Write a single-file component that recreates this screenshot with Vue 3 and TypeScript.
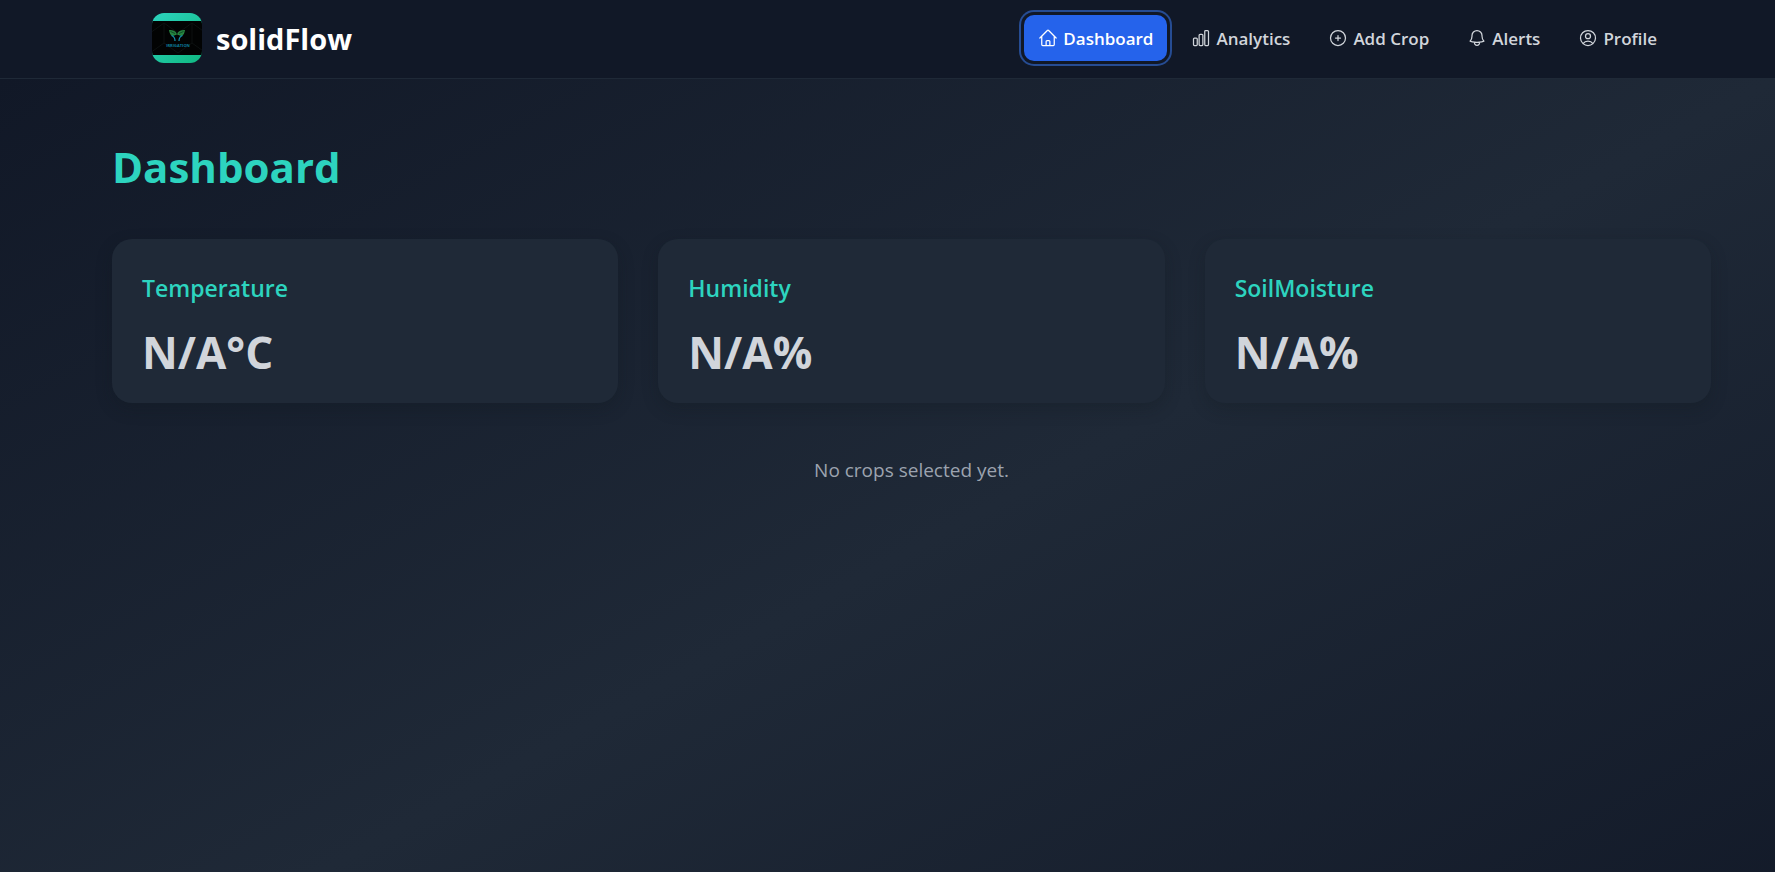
<script setup lang="ts">
import { ref } from 'vue'

interface NavItem {
  label: string
  paths: string[]
}

interface Reading {
  name: string
  value: string
  unit: string
}

const navItems: NavItem[] = [
  {
    label: 'Dashboard',
    paths: [
      'm2.25 12 8.954-8.955c.44-.439 1.152-.439 1.591 0L21.75 12M4.5 9.75v10.125c0 .621.504 1.125 1.125 1.125H9.75v-4.875c0-.621.504-1.125 1.125-1.125h2.25c.621 0 1.125.504 1.125 1.125V21h4.125c.621 0 1.125-.504 1.125-1.125V9.75M8.25 21h8.25',
    ],
  },
  {
    label: 'Analytics',
    paths: [
      'M3 13.125C3 12.504 3.504 12 4.125 12h2.25c.621 0 1.125.504 1.125 1.125v6.75C7.5 20.496 6.996 21 6.375 21h-2.25A1.125 1.125 0 0 1 3 19.875v-6.75Z',
      'M9.75 8.625c0-.621.504-1.125 1.125-1.125h2.25c.621 0 1.125.504 1.125 1.125v11.25c0 .621-.504 1.125-1.125 1.125h-2.25a1.125 1.125 0 0 1-1.125-1.125V8.625Z',
      'M16.5 4.125c0-.621.504-1.125 1.125-1.125h2.25C20.496 3 21 3.504 21 4.125v15.75c0 .621-.504 1.125-1.125 1.125h-2.25a1.125 1.125 0 0 1-1.125-1.125V4.125Z',
    ],
  },
  {
    label: 'Add Crop',
    paths: ['M12 9v6m3-3H9m12 0a9 9 0 1 1-18 0 9 9 0 0 1 18 0Z'],
  },
  {
    label: 'Alerts',
    paths: [
      'M14.857 17.082a23.848 23.848 0 0 0 5.454-1.31A8.967 8.967 0 0 1 18 9.75V9A6 6 0 0 0 6 9v.75a8.967 8.967 0 0 1-2.312 6.022c1.733.64 3.56 1.085 5.455 1.31m5.714 0a24.255 24.255 0 0 1-5.714 0m5.714 0a3 3 0 1 1-5.714 0',
    ],
  },
  {
    label: 'Profile',
    paths: [
      'M17.982 18.725A7.488 7.488 0 0 0 12 15.75a7.488 7.488 0 0 0-5.982 2.975m11.963 0a9 9 0 1 0-11.963 0m11.963 0A8.966 8.966 0 0 1 12 21a8.966 8.966 0 0 1-5.982-2.275M15 9.75a3 3 0 1 1-6 0 3 3 0 0 1 6 0Z',
    ],
  },
]

const readings: Reading[] = [
  { name: 'Temperature', value: 'N/A', unit: '°C' },
  { name: 'Humidity', value: 'N/A', unit: '%' },
  { name: 'SoilMoisture', value: 'N/A', unit: '%' },
]

const active = ref('Dashboard')
</script>

<template>
  <div class="app">
    <header class="topbar">
      <div class="brand">
        <span class="logo">
          <svg viewBox="0 0 50 34" aria-hidden="true">
            <rect width="50" height="34" fill="#020303" />
            <path
              d="M-2 12 12 2 26 12 40 2 54 12M-2 32 12 22 26 32 40 22 54 32M12 2v20M40 2v20"
              fill="none"
              stroke="#0d1111"
            />
            <path
              d="M17 9c3.200-.2 6.200.5 7.600 3.200l.2 1.600c-1.800.2-3.200 1-4.300 1.400C18.600 14.400 17.300 12 17 9ZM33 9c-3.200-.2-6.200.5-7.600 3.200l-.2 1.600c1.800.2 3.200 1 4.300 1.400 1.900-.8 3.200-3.200 3.500-6.200Z"
              fill="#26843f"
            />
            <path d="m18.500 10.500 4.500 2m8.500-2-4.500 2" stroke="#0a3d22" stroke-width=".8" />
            <path
              d="M19.500 14.500c2 .6 3.500 2.200 3.500 5.500M30.500 14.500c-2 .6-3.500 2.200-3.500 5.500"
              fill="none"
              stroke="#128ba8"
              stroke-width="1.300"
            />
            <text x="26" y="26" text-anchor="middle">IRRIGATION</text>
          </svg>
        </span>
        <span class="brand-name">solidFlow</span>
      </div>
      <nav class="nav" aria-label="Main">
        <button
          v-for="item in navItems"
          :key="item.label"
          type="button"
          class="nav-link"
          :class="{ active: active === item.label }"
          @click="active = item.label"
        >
          <svg class="icon" viewBox="0 0 24 24" aria-hidden="true">
            <path v-for="d in item.paths" :key="d" :d="d" />
          </svg>
          <span class="nav-label">{{ item.label }}</span>
        </button>
      </nav>
    </header>

    <main class="page">
      <h1>Dashboard</h1>
      <section class="cards" aria-label="Sensor readings">
        <article v-for="r in readings" :key="r.name" class="card">
          <h2>{{ r.name }}</h2>
          <p class="value">{{ r.value }}{{ r.unit }}</p>
        </article>
      </section>
      <p class="empty">No crops selected yet.</p>
    </main>
  </div>
</template>

<style>
body {
  margin: 0;
  background: #111827;
}

html,
body,
#app {
  height: 100%;
}
</style>

<style scoped>
.app {
  display: flex;
  flex-direction: column;
  height: 100%;
  overflow: hidden;
  font-family: 'Segoe UI', 'Open Sans', 'Noto Sans', sans-serif;
  color: #d1d5db;
}

.topbar {
  flex: none;
  display: flex;
  align-items: center;
  justify-content: space-between;
  padding: 13px 104px 15px 152px;
  background: #111827;
  border-bottom: 1px solid #1f2937;
}

.brand {
  display: flex;
  align-items: center;
  gap: 14px;
}

.logo {
  display: flex;
  align-items: center;
  width: 50px;
  height: 50px;
  overflow: hidden;
  border-radius: 12px;
  background: linear-gradient(135deg, #2dd4bf, #10b981);
}

.logo svg {
  width: 100%;
}

.logo text {
  font-size: 4px;
  font-weight: 700;
  fill: #0c7f9c;
}

.brand-name {
  padding-top: 2px;
  font-size: 29px;
  font-weight: 700;
  line-height: 40px;
  color: #fff;
}

.nav {
  display: flex;
  gap: 10px;
}

.nav-link {
  display: flex;
  align-items: center;
  gap: 5px;
  padding: 9px 14px;
  border: 0;
  border-radius: 10px;
  background: transparent;
  color: #d1d5db;
  font-family: inherit;
  font-size: 17px;
  font-weight: 600;
  line-height: 26px;
  cursor: pointer;
}

.nav-label {
  padding-top: 2px;
}

.nav-link.active {
  background: #2563eb;
  color: #fff;
  box-shadow: 0 0 0 3px #111827, 0 0 0 5px #264c93;
}

.icon {
  width: 20px;
  height: 20px;
  fill: none;
  stroke: currentColor;
  stroke-width: 1.5;
  stroke-linecap: round;
  stroke-linejoin: round;
}

.page {
  flex: none;
  min-height: 100%;
  padding: 48px 64px 48px 112px;
  background: linear-gradient(to bottom right, #111827, #1f2937 50%, #111827);
}

h1 {
  margin: 0;
  font-size: 42px;
  font-weight: 700;
  line-height: 80px;
  color: #2dd4bf;
}

.cards {
  display: grid;
  grid-template-columns: repeat(3, 1fr);
  gap: 40px;
  margin-top: 32px;
}

.card {
  padding: 30px;
  border-radius: 20px;
  background: #1f2937;
  box-shadow: 0 6px 16px rgba(17, 24, 28, 0.25);
}

h2 {
  margin: 0;
  font-size: 23px;
  font-weight: 600;
  line-height: 38px;
  color: #2dd4bf;
}

.value {
  margin: 24px 0 0;
  font-size: 44px;
  font-weight: 700;
  line-height: 42px;
}

.empty {
  margin: 52px 0 0;
  font-size: 19px;
  line-height: 30px;
  text-align: center;
  color: #9ca3af;
}
</style>
